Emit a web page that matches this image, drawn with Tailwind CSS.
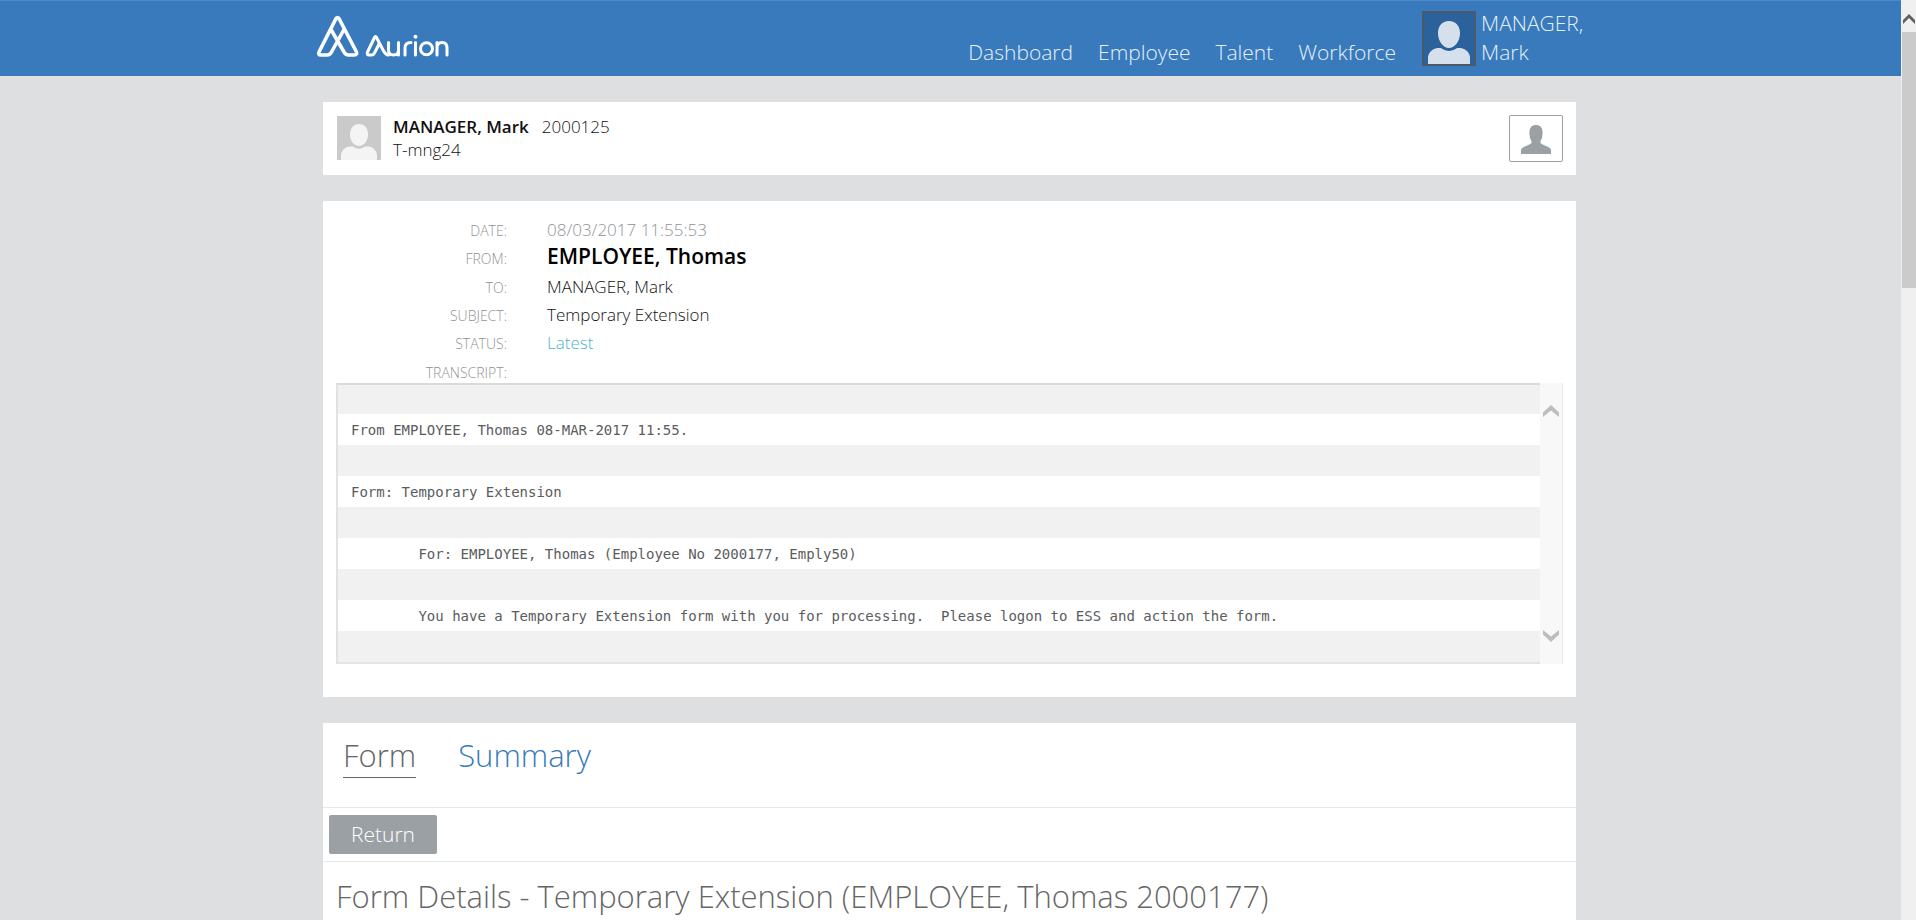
<!DOCTYPE html>
<html lang="en">
<head>
<meta charset="utf-8">
<title>Aurion - Temporary Extension</title>
<script src="https://cdn.jsdelivr.net/npm/@tailwindcss/browser@4"></script>
</head>
<body class="flex h-screen overflow-hidden bg-[#dddfe1] font-['Open_Sans',sans-serif] font-light text-[#111]">
<div class="min-w-0 flex-1 overflow-hidden">
  <header class="h-[76px] border-t border-[#4c8ac8] bg-[#387abb] text-[#e6f0f8]">
    <div class="mx-auto flex h-full max-w-[1267px] justify-between">
      <a href="#" aria-label="Aurion home" class="pt-[13px]">
        <svg class="h-[48px] w-[136px]" viewBox="0 0 136 48" fill="none" stroke="#fff" stroke-linecap="round" stroke-linejoin="round">
          <path stroke-width="3.6" d="M19 4.500Q20.500 2.500 22 4.500L39 37Q41 41 37 41H31.500Q28.500 41 27 38L14 15.500M19 4.500L2.500 37Q0.500 41 4 41H10Q13 41 14.500 38L27 15.500"/>
          <path stroke-width="3" d="M57.500 23.500Q58.500 21.500 59.500 23.500L65.500 35Q68.500 41 71.500 41M57.500 23.500L50.500 38Q49.500 41 52 41H54.500Q56.500 41 57.500 39L62 30"/>
          <path stroke-width="3" d="M71.500 28.500V36Q71.500 41 76.500 41T81.500 36V28.500M81.500 36V41M88 41V34Q88 28.500 94 28.500M98.500 28.500V41M130 41V34Q130 28.500 125 28.500T120 34V41M120 28.500V34"/>
          <circle cx="109.500" cy="34.700" r="6" stroke-width="3"/>
          <circle cx="98.500" cy="22.800" r="2" fill="#fff" stroke="none"/>
        </svg>
      </a>
      <div class="flex">
        <nav class="flex gap-[25px] pt-[37px] text-[21px] leading-[29px]">
          <a href="#">Dashboard</a>
          <a href="#">Employee</a>
          <a href="#">Talent</a>
          <a href="#">Workforce</a>
        </nav>
        <a href="#" class="ml-[26px] flex pt-[8px] text-[21px] leading-[29px]">
          <svg class="mt-[2px] h-[55px] w-[54px] shrink-0" viewBox="0 0 54 55">
            <path fill="#2c629b" stroke="#4a5a6b" stroke-width="2" d="M1 1h52v53H1z"/>
            <path fill="#d6e0ec" d="M6 53V46Q7 39 15 37H20Q27 42 34 37H39Q47 39 48 46V53ZM27 10C34 10 38 15 38 22C38 30 33 37 27 37S16 30 16 22C16 15 20 10 27 10Z"/>
            <path fill="none" stroke="#2c629b" stroke-width="2" d="M19 36Q27 42 35 36"/>
          </svg>
          <span class="ml-[5px] w-[103px] whitespace-nowrap">MANAGER,<br>Mark</span>
        </a>
      </div>
    </div>
  </header>

  <main class="mx-auto mt-[26px] flex max-w-[1255px] flex-col gap-[26px] pr-[2px]">
    <section class="flex h-[73px] bg-white px-[13px] pt-[13px]">
      <svg class="mt-px ml-px h-11 w-11 shrink-0" viewBox="0 0 44 44">
        <path fill="#cacaca" d="M0 0h44v44H0z"/>
        <path fill="#f4f4f4" d="M4 44V39Q5 32 12 30.500H16Q22 35 28 30.500H32Q39 32 40 39V44ZM22 8C28 8 31 12.500 31 18.500C31 25 27 30 22 30S13 25 13 18.500C13 12.500 16 8 22 8Z"/>
      </svg>
      <div class="ml-[12px] text-[17px] leading-[23px]">
        <p><strong class="mr-[13px] font-semibold">MANAGER, Mark</strong>2000125</p>
        <p>T-mng24</p>
      </div>
      <button type="button" aria-label="Profile" class="ml-auto flex h-[47px] w-[54px] justify-center rounded-[2px] border border-[#9ba0a4] pt-[9px]">
        <svg class="h-[29px] w-[30px]" viewBox="0 0 30 29"><path fill="#9ba0a4" d="M15 0C19 0 21.500 2.500 21.500 7Q22 12 19.500 16V18Q22 20 25 21Q30 23 30 25V29H0V25Q0 23 5 21Q8 20 10.500 18V16Q8 12 8.500 7C8.500 2.500 11 0 15 0Z"/></svg>
      </button>
    </section>

    <section class="bg-white px-[13px] pt-[15px] pb-[33px]">
      <dl class="grid grid-cols-[171px_1fr] grid-rows-[28px_29px_28px_28px_29px_25px] gap-x-10 text-[17px] leading-7 [&>dt]:text-right [&>dt]:text-[14px] [&>dt]:leading-[30px] [&>dt]:text-[#8f9396]">
        <dt>DATE:</dt><dd class="text-[#8f9396]">08/03/2017 11:55:53</dd>
        <dt>FROM:</dt><dd class="text-[21px] leading-[24px] font-semibold text-black">EMPLOYEE, Thomas</dd>
        <dt>TO:</dt><dd>MANAGER, Mark</dd>
        <dt>SUBJECT:</dt><dd>Temporary Extension</dd>
        <dt>STATUS:</dt><dd class="text-[#4fb3c9]">Latest</dd>
        <dt class="h-[25px]">TRANSCRIPT:</dt><dd></dd>
      </dl>
      <div class="flex">
        <div class="min-w-0 flex-1 overflow-hidden border-t-2 border-b-2 border-l-2 border-t-[#d9dadb] border-b-[#e4e4e4] border-l-[#e2e2e2] font-['DejaVu_Sans_Mono',monospace] text-[14px] leading-[33px] font-normal whitespace-pre text-[#5a5c5e]"><p class="h-[29px] bg-[#f1f1f1]"></p><p class="h-[31px] pl-[13px]">From EMPLOYEE, Thomas 08-MAR-2017 11:55.</p><p class="h-[31px] bg-[#f1f1f1]"></p><p class="h-[31px] pl-[13px]">Form: Temporary Extension</p><p class="h-[31px] bg-[#f1f1f1]"></p><p class="h-[31px] pl-[13px]">        For: EMPLOYEE, Thomas (Employee No 2000177, Emply50)</p><p class="h-[31px] bg-[#f1f1f1]"></p><p class="h-[31px] pl-[13px]">        You have a Temporary Extension form with you for processing.  Please logon to ESS and action the form.</p><p class="h-[31px] bg-[#f1f1f1]"></p></div>
        <div class="flex w-[23px] flex-col items-center justify-between border-r border-[#ebebeb] bg-[#f8f8f8] pt-[22px] pb-[22px]">
          <svg class="h-3 w-4" viewBox="0 0 16 12" fill="#bdbdbd"><path d="M0 7.500L8 0L16 7.500V12L8 5.500L0 12Z"/></svg>
          <svg class="h-3 w-4" viewBox="0 0 16 12" fill="#bdbdbd"><path d="M0 4.500L8 12L16 4.500V0L8 6.500L0 0Z"/></svg>
        </div>
      </div>
    </section>

    <section class="bg-white">
      <nav class="flex h-[85px] gap-[42px] border-b border-[#e4eaea] pt-[11px] pl-5 text-[31px] leading-[42px]">
        <a href="#" class="h-[44px] border-b border-[#666] text-[#666]">Form</a>
        <a href="#" class="text-[#387abb]">Summary</a>
      </nav>
      <div class="border-b border-[#e4eaea] px-[6px] py-[7px]">
        <button type="button" class="h-[39px] w-[108px] rounded-[2px] bg-[#9ba0a4] pt-px text-[21px] text-white">Return</button>
      </div>
      <h1 class="px-[13px] pt-[11px] pb-10 text-[31px] leading-[46px] text-[#666]">Form Details - Temporary Extension (EMPLOYEE, Thomas 2000177)</h1>
    </section>
  </main>
</div>
<aside aria-hidden="true" class="w-[15px] shrink-0 bg-[#f0f0f0] pl-px">
  <div class="flex h-8 items-center justify-center pt-[6px]"><svg class="h-[10px] w-[12px]" viewBox="0 0 12 10" fill="#606060"><path d="M0 6L6 0L12 6V10L6 4L0 10Z"/></svg></div>
  <div class="h-[256px] bg-[#cbcbcb]"></div>
</aside>
</body>
</html>
